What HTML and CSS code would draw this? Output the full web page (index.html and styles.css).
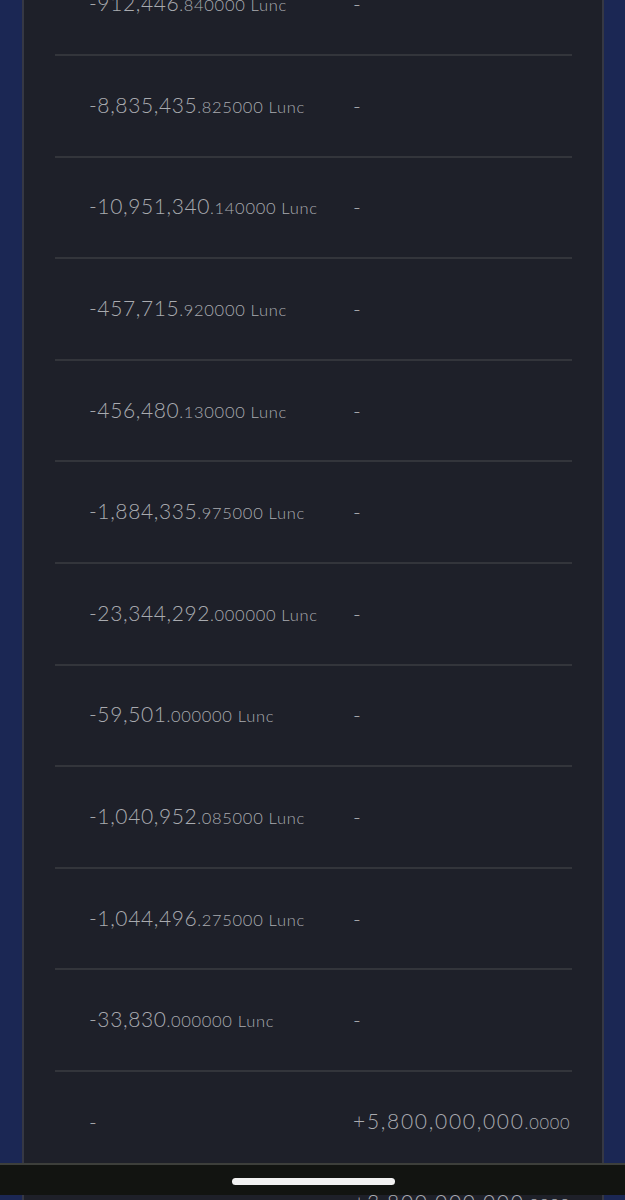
FILE: index.html
```html
<!DOCTYPE html>
<html lang="en">
<head>
    <meta charset="UTF-8">
    <meta name="viewport" content="width=device-width, initial-scale=1.0">
    <title>Transactions</title>
    <link rel="stylesheet" href="styles.css">
</head>
<body>
    <div class="screen">
        <div class="panel">
            <ul class="tx-list">
                <li class="tx-row">
                    <div class="col col-out"><span class="whole">-912,446</span><span class="frac">.840000 Lunc</span></div>
                    <div class="col col-in">-</div>
                </li>
                <li class="tx-row">
                    <div class="col col-out"><span class="whole">-8,835,435</span><span class="frac">.825000 Lunc</span></div>
                    <div class="col col-in">-</div>
                </li>
                <li class="tx-row">
                    <div class="col col-out"><span class="whole">-10,951,340</span><span class="frac">.140000 Lunc</span></div>
                    <div class="col col-in">-</div>
                </li>
                <li class="tx-row">
                    <div class="col col-out"><span class="whole">-457,715</span><span class="frac">.920000 Lunc</span></div>
                    <div class="col col-in">-</div>
                </li>
                <li class="tx-row">
                    <div class="col col-out"><span class="whole">-456,480</span><span class="frac">.130000 Lunc</span></div>
                    <div class="col col-in">-</div>
                </li>
                <li class="tx-row">
                    <div class="col col-out"><span class="whole">-1,884,335</span><span class="frac">.975000 Lunc</span></div>
                    <div class="col col-in">-</div>
                </li>
                <li class="tx-row">
                    <div class="col col-out"><span class="whole">-23,344,292</span><span class="frac">.000000 Lunc</span></div>
                    <div class="col col-in">-</div>
                </li>
                <li class="tx-row">
                    <div class="col col-out"><span class="whole">-59,501</span><span class="frac">.000000 Lunc</span></div>
                    <div class="col col-in">-</div>
                </li>
                <li class="tx-row">
                    <div class="col col-out"><span class="whole">-1,040,952</span><span class="frac">.085000 Lunc</span></div>
                    <div class="col col-in">-</div>
                </li>
                <li class="tx-row">
                    <div class="col col-out"><span class="whole">-1,044,496</span><span class="frac">.275000 Lunc</span></div>
                    <div class="col col-in">-</div>
                </li>
                <li class="tx-row">
                    <div class="col col-out"><span class="whole">-33,830</span><span class="frac">.000000 Lunc</span></div>
                    <div class="col col-in">-</div>
                </li>
                <li class="tx-row">
                    <div class="col col-out">-</div>
                    <div class="col col-in"><span class="whole">+5,800,000,000</span><span class="frac">.0000</span></div>
                </li>
                <li class="tx-row tx-row--peek">
                    <div class="col col-out">-</div>
                    <div class="col col-in"><span class="whole">+3,800,000,000</span><span class="frac">.0000</span></div>
                </li>
            </ul>
        </div>
    </div>

    <div class="home-bar"><span class="home-pill"></span></div>
</body>
</html>
```

FILE: styles.css
```css
html, body {
    margin: 0;
    padding: 0;
    height: 1200px;
    overflow: hidden;
    background-color: #1b2754;
    font-family: Lato, "Open Sans", sans-serif;
}
.screen {
    height: 1200px;
    padding: 0 21px 0 22px;
}
.panel {
    height: 1200px;
    background-color: #1e2029;
    border-left: 2px solid #363844;
    border-right: 2px solid #363844;
    overflow: hidden;
}
.tx-list {
    list-style: none;
    margin: -45.6px 0 0;
    padding: 0 30px 0 31px;
}
.tx-row {
    display: flex;
    align-items: center;
    height: 99.6px;
    border-bottom: 2px solid #33353b;
    color: #a9abb0;
}
.tx-row--peek {
    align-items: flex-start;
    padding-top: 16px;
    border-bottom: none;
}
.col {
    white-space: nowrap;
    font-size: 21px;
    font-weight: 300;
    letter-spacing: 0.6px;
    line-height: 24px;
}
.col-out {
    width: 264px;
    padding-left: 34px;
}
.col-in {
    flex: 1;
}
.col-in .whole {
    letter-spacing: 1.7px;
}
.frac {
    font-size: 16.5px;
    letter-spacing: 0.7px;
}
.home-bar {
    position: fixed;
    left: 0;
    right: 0;
    top: 1163px;
    height: 30px;
    background-color: #121411;
    border-top: 2px solid #3d3f3b;
}
.home-pill {
    position: absolute;
    left: 232px;
    top: 13px;
    width: 163px;
    height: 7px;
    border-radius: 4px;
    background-color: #f2f2f2;
}
```
